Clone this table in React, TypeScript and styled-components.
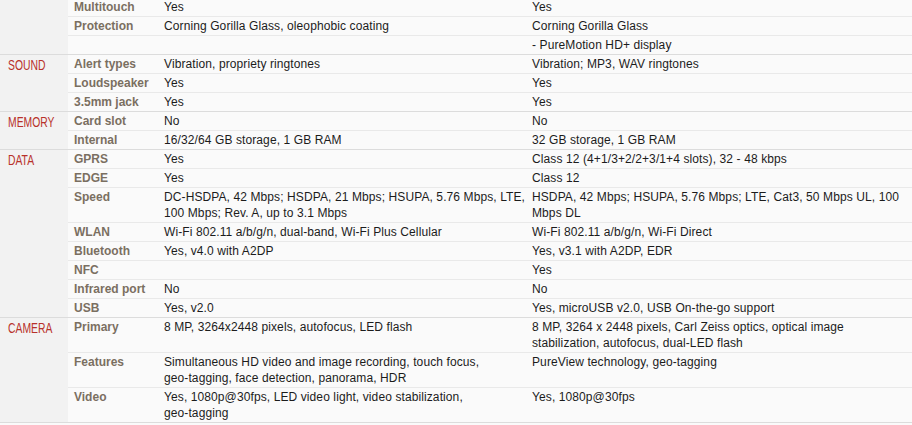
import React from "react";
import styled, { createGlobalStyle } from "styled-components";

const GlobalStyle = createGlobalStyle`
  html, body { margin: 0; padding: 0; background: #fafafa; }
  body { overflow: hidden; }
`;

type Row = { name: string; a: string; b: string };
type Section = { title: string; rows: Row[] };

const sections: Section[] = [
  {
    title: "",
    rows: [
      { name: "Multitouch", a: "Yes", b: "Yes" },
      { name: "Protection", a: "Corning Gorilla Glass, oleophobic coating", b: "Corning Gorilla Glass" },
      { name: "", a: "", b: "- PureMotion HD+ display" },
    ],
  },
  {
    title: "SOUND",
    rows: [
      { name: "Alert types", a: "Vibration, propriety ringtones", b: "Vibration; MP3, WAV ringtones" },
      { name: "Loudspeaker", a: "Yes", b: "Yes" },
      { name: "3.5mm jack", a: "Yes", b: "Yes" },
    ],
  },
  {
    title: "MEMORY",
    rows: [
      { name: "Card slot", a: "No", b: "No" },
      { name: "Internal", a: "16/32/64 GB storage, 1 GB RAM", b: "32 GB storage, 1 GB RAM" },
    ],
  },
  {
    title: "DATA",
    rows: [
      { name: "GPRS", a: "Yes", b: "Class 12 (4+1/3+2/2+3/1+4 slots), 32 - 48 kbps" },
      { name: "EDGE", a: "Yes", b: "Class 12" },
      {
        name: "Speed",
        a: "DC-HSDPA, 42 Mbps; HSDPA, 21 Mbps; HSUPA, 5.76 Mbps, LTE, 100 Mbps; Rev. A, up to 3.1 Mbps",
        b: "HSDPA, 42 Mbps; HSUPA, 5.76 Mbps; LTE, Cat3, 50 Mbps UL, 100 Mbps DL",
      },
      { name: "WLAN", a: "Wi-Fi 802.11 a/b/g/n, dual-band, Wi-Fi Plus Cellular", b: "Wi-Fi 802.11 a/b/g/n, Wi-Fi Direct" },
      { name: "Bluetooth", a: "Yes, v4.0 with A2DP", b: "Yes, v3.1 with A2DP, EDR" },
      { name: "NFC", a: "", b: "Yes" },
      { name: "Infrared port", a: "No", b: "No" },
      { name: "USB", a: "Yes, v2.0", b: "Yes, microUSB v2.0, USB On-the-go support" },
    ],
  },
  {
    title: "CAMERA",
    rows: [
      {
        name: "Primary",
        a: "8 MP, 3264x2448 pixels, autofocus, LED flash",
        b: "8 MP, 3264 x 2448 pixels, Carl Zeiss optics, optical image stabilization, autofocus, dual-LED flash",
      },
      {
        name: "Features",
        a: "Simultaneous HD video and image recording, touch focus, geo-tagging, face detection, panorama, HDR",
        b: "PureView technology, geo-tagging",
      },
      {
        name: "Video",
        a: "Yes, 1080p@30fps, LED video light, video stabilization, geo-tagging",
        b: "Yes, 1080p@30fps",
      },
    ],
  },
];

const Wrapper = styled.div`
  width: 912px;
  margin-top: -2px;
  background: #fafafa;
`;

const Table = styled.table`
  width: 912px;
  border-collapse: collapse;
  table-layout: fixed;
  font-family: "Liberation Sans", Arial, sans-serif;
  font-size: 12px;
  line-height: 16px;
  letter-spacing: 0.1px;
`;

const SectionBody = styled.tbody`
  & > tr:last-child > td {
    border-bottom: 1px solid #dcdcdc;
  }
`;

const SectionCell = styled.td`
  background: #f2f2f2;
  vertical-align: top;
  padding: 2px 0 0 8px;
  border-bottom: 1px solid #dcdcdc;
  overflow: hidden;
`;

const SectionTitle = styled.span`
  display: inline-block;
  color: #b8312a;
  font-family: "Liberation Sans", Arial, sans-serif;
  font-size: 14px;
  line-height: 16px;
  letter-spacing: 0;
  transform: scaleX(0.74);
  transform-origin: left center;
  white-space: nowrap;
`;

const NameCell = styled.td`
  vertical-align: top;
  padding: 1px 4px 1px 6px;
  font-weight: bold;
  color: #7a6f61;
  letter-spacing: 0;
  white-space: nowrap;
  border-bottom: 1px solid #e9e9e9;
`;

const ValueCell = styled.td<{ $second?: boolean }>`
  vertical-align: top;
  padding: ${(p) => (p.$second ? "1px 4px 1px 2px" : "1px 0 1px 6px")};
  color: #1c1c1c;
  border-bottom: 1px solid #e9e9e9;
`;

const NoBreak = styled.span`
  white-space: nowrap;
`;

function renderText(text: string) {
  const words = text.split(" ");
  return words.map((w, i) => (
    <React.Fragment key={i}>
      {w.includes("-") && w.length > 1 ? <NoBreak>{w}</NoBreak> : w}
      {i < words.length - 1 ? " " : ""}
    </React.Fragment>
  ));
}

export default function App() {
  return (
    <>
      <GlobalStyle />
      <Wrapper>
        <Table>
          <colgroup>
            <col style={{ width: 68 }} />
            <col style={{ width: 90 }} />
            <col style={{ width: 372 }} />
            <col />
          </colgroup>
          {sections.map((s, si) => (
            <SectionBody key={si}>
              {s.rows.map((r, ri) => (
                <tr key={ri}>
                  {ri === 0 && (
                    <SectionCell rowSpan={s.rows.length}>
                      <SectionTitle>{s.title}</SectionTitle>
                    </SectionCell>
                  )}
                  <NameCell>{r.name}</NameCell>
                  <ValueCell>{renderText(r.a)}</ValueCell>
                  <ValueCell $second>{renderText(r.b)}</ValueCell>
                </tr>
              ))}
            </SectionBody>
          ))}
        </Table>
      </Wrapper>
    </>
  );
}
